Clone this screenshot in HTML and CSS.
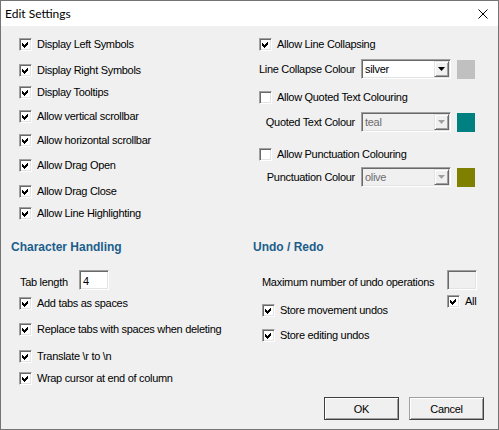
FILE: index.html
```html
<!DOCTYPE html>
<html>
<head>
<meta charset="utf-8">
<title>Edit Settings</title>
<link rel="stylesheet" href="styles.css">
</head>
<body>
<div class="window">
  <div class="titlebar">
    <span class="title">Edit Settings</span>
    <svg class="close" width="10" height="10" viewBox="0 0 10 10"><path d="M0.5 0.5 L9.5 9.5 M9.5 0.5 L0.5 9.5" stroke="#000" stroke-width="1" fill="none"/></svg>
  </div>
  <div class="client">
    <div class="top">
      <div class="col-left">
        <div class="chk"><span class="box"><svg viewBox="0 0 7 7" width="7" height="7"><path d="M0 2 L2 4 L6 0 L6 3 L2 7 L0 5 Z"/></svg></span><span>Display Left Symbols</span></div>
        <div class="chk"><span class="box"><svg viewBox="0 0 7 7" width="7" height="7"><path d="M0 2 L2 4 L6 0 L6 3 L2 7 L0 5 Z"/></svg></span><span>Display Right Symbols</span></div>
        <div class="chk"><span class="box"><svg viewBox="0 0 7 7" width="7" height="7"><path d="M0 2 L2 4 L6 0 L6 3 L2 7 L0 5 Z"/></svg></span><span>Display Tooltips</span></div>
        <div class="chk"><span class="box"><svg viewBox="0 0 7 7" width="7" height="7"><path d="M0 2 L2 4 L6 0 L6 3 L2 7 L0 5 Z"/></svg></span><span>Allow vertical scrollbar</span></div>
        <div class="chk"><span class="box"><svg viewBox="0 0 7 7" width="7" height="7"><path d="M0 2 L2 4 L6 0 L6 3 L2 7 L0 5 Z"/></svg></span><span>Allow horizontal scrollbar</span></div>
        <div class="chk"><span class="box"><svg viewBox="0 0 7 7" width="7" height="7"><path d="M0 2 L2 4 L6 0 L6 3 L2 7 L0 5 Z"/></svg></span><span>Allow Drag Open</span></div>
        <div class="chk"><span class="box"><svg viewBox="0 0 7 7" width="7" height="7"><path d="M0 2 L2 4 L6 0 L6 3 L2 7 L0 5 Z"/></svg></span><span>Allow Drag Close</span></div>
        <div class="chk"><span class="box"><svg viewBox="0 0 7 7" width="7" height="7"><path d="M0 2 L2 4 L6 0 L6 3 L2 7 L0 5 Z"/></svg></span><span>Allow Line Highlighting</span></div>
      </div>
      <div class="col-right">
        <div class="chk"><span class="box"><svg viewBox="0 0 7 7" width="7" height="7"><path d="M0 2 L2 4 L6 0 L6 3 L2 7 L0 5 Z"/></svg></span><span>Allow Line Collapsing</span></div>
        <div class="colour-row">
          <span class="lbl">Line Collapse Colour</span>
          <span class="combo"><span class="combo-text">silver</span><span class="combo-btn"><svg width="7" height="4" viewBox="0 0 7 4"><path d="M0 0 H7 L3.5 4 Z" fill="#000"/></svg></span></span>
          <span class="swatch swatch-silver"></span>
        </div>
        <div class="chk"><span class="box"></span><span>Allow Quoted Text Colouring</span></div>
        <div class="colour-row">
          <span class="lbl">Quoted Text Colour</span>
          <span class="combo disabled"><span class="combo-text">teal</span><span class="combo-btn"><svg width="7" height="4" viewBox="0 0 7 4"><path d="M0 0 H7 L3.5 4 Z" fill="#a0a0a0"/></svg></span></span>
          <span class="swatch swatch-teal"></span>
        </div>
        <div class="chk"><span class="box"></span><span>Allow Punctuation Colouring</span></div>
        <div class="colour-row">
          <span class="lbl">Punctuation Colour</span>
          <span class="combo disabled"><span class="combo-text">olive</span><span class="combo-btn"><svg width="7" height="4" viewBox="0 0 7 4"><path d="M0 0 H7 L3.5 4 Z" fill="#a0a0a0"/></svg></span></span>
          <span class="swatch swatch-olive"></span>
        </div>
      </div>
    </div>

    <div class="sections">
      <div class="sec">
        <div class="sec-head">Character Handling</div>
        <div class="tab-row"><span class="tab-lbl">Tab length</span><span class="edit">4</span></div>
        <div class="char-list">
          <div class="chk"><span class="box"><svg viewBox="0 0 7 7" width="7" height="7"><path d="M0 2 L2 4 L6 0 L6 3 L2 7 L0 5 Z"/></svg></span><span>Add tabs as spaces</span></div>
          <div class="chk"><span class="box"><svg viewBox="0 0 7 7" width="7" height="7"><path d="M0 2 L2 4 L6 0 L6 3 L2 7 L0 5 Z"/></svg></span><span>Replace tabs with spaces when deleting</span></div>
          <div class="chk"><span class="box"><svg viewBox="0 0 7 7" width="7" height="7"><path d="M0 2 L2 4 L6 0 L6 3 L2 7 L0 5 Z"/></svg></span><span>Translate \r to \n</span></div>
          <div class="chk"><span class="box"><svg viewBox="0 0 7 7" width="7" height="7"><path d="M0 2 L2 4 L6 0 L6 3 L2 7 L0 5 Z"/></svg></span><span>Wrap cursor at end of column</span></div>
        </div>
      </div>
      <div class="sec">
        <div class="sec-head">Undo / Redo</div>
        <div class="undo">
          <div class="undo-main">
            <div class="undo-label">Maximum number of undo operations</div>
            <div class="chk chk-move"><span class="box"><svg viewBox="0 0 7 7" width="7" height="7"><path d="M0 2 L2 4 L6 0 L6 3 L2 7 L0 5 Z"/></svg></span><span>Store movement undos</span></div>
            <div class="chk chk-edit"><span class="box"><svg viewBox="0 0 7 7" width="7" height="7"><path d="M0 2 L2 4 L6 0 L6 3 L2 7 L0 5 Z"/></svg></span><span>Store editing undos</span></div>
          </div>
          <div class="undo-side">
            <span class="edit disabled"></span>
            <div class="chk chk-all"><span class="box"><svg viewBox="0 0 7 7" width="7" height="7"><path d="M0 2 L2 4 L6 0 L6 3 L2 7 L0 5 Z"/></svg></span><span>All</span></div>
          </div>
        </div>
      </div>
    </div>

    <div class="footer">
      <button class="btn btn-default">OK</button>
      <button class="btn">Cancel</button>
    </div>
  </div>
</div>
</body>
</html>
```

FILE: styles.css
```css
* { box-sizing: border-box; }

html, body {
  margin: 0;
  padding: 0;
  background: #f0f0f0;
}

body {
  font-family: "Liberation Sans", Arial, sans-serif;
  font-size: 11px;
  letter-spacing: -0.3px;
  color: #000;
}

.window {
  width: 499px;
  height: 430px;
  border: 1px solid #747474;
  display: flex;
  flex-direction: column;
  background: #f0f0f0;
}

.titlebar {
  height: 25px;
  flex: none;
  background: #fff;
  display: flex;
  align-items: center;
  padding-left: 4px;
}

.title {
  font-family: Lato, "Noto Sans", sans-serif;
  font-size: 12px;
  letter-spacing: 0;
  color: #000;
}

.close {
  margin-left: auto;
  margin-right: 10px;
  display: block;
}

.client {
  flex: 1;
  display: flex;
  flex-direction: column;
  padding-top: 11px;
}

/* checkbox rows */
.chk {
  display: flex;
  align-items: center;
  height: 14px;
  line-height: 14px;
  white-space: nowrap;
}

.box {
  width: 13px;
  height: 13px;
  flex: none;
  margin-right: 5px;
  background: #fff;
  border: 1px solid;
  border-color: #a0a0a0 #fff #fff #a0a0a0;
  box-shadow: inset 1px 1px 0 #696969, inset -1px -1px 0 #e3e3e3;
  display: flex;
  align-items: center;
  justify-content: center;
}

.box svg {
  display: block;
  fill: #000;
  shape-rendering: crispEdges;
}

/* top area */
.top {
  display: grid;
  grid-template-columns: 240px 1fr;
  padding-left: 18px;
}

.col-left {
  display: grid;
  grid-template-rows: 26px 22px 24px 24px 25px 26px 22px 14px;
  align-items: start;
}

.col-right {
  display: grid;
  grid-template-rows: 22px 31px 22px 35px 20px 20px;
  align-items: start;
}

.colour-row {
  display: flex;
  align-items: center;
  height: 20px;
}

.lbl {
  width: 96px;
  text-align: right;
  margin-right: 6px;
  white-space: nowrap;
}

.combo {
  width: 90px;
  height: 20px;
  display: flex;
  align-items: stretch;
  padding: 1px;
  background: #fff;
  border: 1px solid;
  border-color: #a0a0a0 #fff #fff #a0a0a0;
  box-shadow: inset 1px 1px 0 #696969, inset -1px -1px 0 #e3e3e3;
  margin-right: 6px;
}

.combo-text {
  flex: 1;
  padding-left: 2px;
  line-height: 16px;
}

.combo-btn {
  width: 15px;
  flex: none;
  background: #f0f0f0;
  border: 1px solid;
  border-color: #e3e3e3 #696969 #696969 #e3e3e3;
  box-shadow: inset 1px 1px 0 #fff, inset -1px -1px 0 #a0a0a0;
  display: flex;
  align-items: center;
  justify-content: center;
}

.combo-btn svg { display: block; }

.combo.disabled {
  background: #f0f0f0;
}

.combo.disabled .combo-text {
  color: #6d6d6d;
}

.swatch {
  width: 18px;
  height: 19px;
  display: block;
}

.swatch-silver { background: #c0c0c0; }
.swatch-teal { background: #008080; }
.swatch-olive { background: #808000; }

/* sections */
.sections {
  display: grid;
  grid-template-columns: 242px 1fr;
  padding-left: 10px;
  margin-top: 20px;
}

.sec-head {
  height: 14px;
  line-height: 14px;
  font-size: 12px;
  font-weight: bold;
  color: #1b5e8b;
  letter-spacing: 0;
  white-space: nowrap;
}

.tab-row {
  margin-top: 16px;
  padding-left: 9px;
  display: flex;
  align-items: flex-start;
  height: 20px;
}

.tab-lbl {
  width: 59px;
  padding-top: 5px;
  line-height: 14px;
}

.edit {
  width: 30px;
  height: 20px;
  display: block;
  padding: 3px 0 0 3px;
  line-height: 14px;
  background: #fff;
  border: 1px solid;
  border-color: #a0a0a0 #fff #fff #a0a0a0;
  box-shadow: inset 1px 1px 0 #696969, inset -1px -1px 0 #e3e3e3;
}

.edit.disabled {
  background: #f0f0f0;
}

.char-list {
  margin-top: 6px;
  padding-left: 8px;
  display: grid;
  grid-template-rows: 26px 27px 22px 14px;
  align-items: start;
}

.undo {
  margin-top: 16px;
  padding-left: 9px;
  display: flex;
}

.undo-main {
  width: 185px;
  display: flex;
  flex-direction: column;
}

.undo-label {
  height: 20px;
  padding-top: 5px;
  line-height: 14px;
  white-space: nowrap;
}

.chk-move { margin-top: 13px; }
.chk-edit { margin-top: 11px; }

.undo-side {
  display: flex;
  flex-direction: column;
}

.chk-all { margin-top: 4px; }

/* footer buttons */
.footer {
  margin-top: auto;
  display: flex;
  justify-content: flex-end;
  gap: 10px;
  padding: 0 14px 9px 0;
}

.btn {
  width: 75px;
  height: 23px;
  font-family: "Liberation Sans", Arial, sans-serif;
  font-size: 11px;
  letter-spacing: -0.3px;
  color: #000;
  background: #f0f0f0;
  border: 1px solid;
  border-color: #a0a0a0 #404040 #404040 #a0a0a0;
  box-shadow: inset 1px 1px 0 #fff, inset -1px -1px 0 #a0a0a0;
  padding: 0;
  margin: 0;
}

.btn-default {
  border-color: #404040;
}
```
